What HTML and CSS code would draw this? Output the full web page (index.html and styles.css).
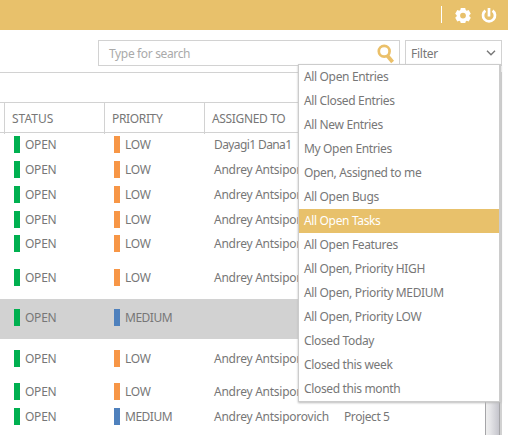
FILE: index.html
```html
<!DOCTYPE html>
<html lang="en">
<head>
<meta charset="utf-8">
<title>Entries</title>
<link rel="stylesheet" href="styles.css">
</head>
<body>
<header class="topbar">
  <span class="divider"></span>
  <svg class="gear" viewBox="0 0 16 16" width="16" height="16"><path fill="#fff" fill-rule="evenodd" d="M5.800 1h4.400l.5 2.100 1 .6 2-.7 2.100 3.700-1.500 1.500v1.100l1.500 1.500-2.100 3.700-2-.7-1 .6-.5 1.900H5.800l-.5-1.900-1-.6-2 .7L.2 10.800l1.500-1.500V8.200L.2 6.700 2.300 3l2 .7 1-.6zM8 5.700a2.900 2.900 0 1 0 0 5.800 2.900 2.900 0 0 0 0-5.800z"/></svg>
  <svg class="power" viewBox="0 0 16 18" width="16" height="18" fill="none" stroke="#fff" stroke-width="2.700"><path d="M4.400 4.600a6 6 0 1 0 7.200 0M8 2v8.500"/></svg>
</header>
<div class="tools">
  <div class="search"><span>Type for search</span>
    <svg viewBox="0 0 18 20" width="18" height="20" fill="none" stroke="#ebc069"><circle cx="7.200" cy="7.300" r="5.400" stroke-width="2.700"/><path d="M10.600 12l5 6" stroke-width="3.700"/></svg>
  </div>
  <div class="filter"><span>Filter</span>
    <svg viewBox="0 0 10 6" width="10" height="6" fill="none" stroke="#777" stroke-width="1.400"><path d="M1 .8l4 4 4-4"/></svg>
    <ul class="menu">
      <li>All Open Entries</li>
      <li>All Closed Entries</li>
      <li>All New Entries</li>
      <li>My Open Entries</li>
      <li>Open, Assigned to me</li>
      <li>All Open Bugs</li>
      <li class="active">All Open Tasks</li>
      <li>All Open Features</li>
      <li>All Open, Priority HIGH</li>
      <li>All Open, Priority MEDIUM</li>
      <li>All Open, Priority LOW</li>
      <li>Closed Today</li>
      <li>Closed this week</li>
      <li>Closed this month</li>
    </ul>
  </div>
</div>
<main class="panel">
  <div class="head"><span></span><span class="status">STATUS</span><span>PRIORITY</span><span>ASSIGNED TO</span></div>
  <div class="body">
    <div class="rows">
      <div class="row"><span class="tag open">OPEN</span><span class="tag low">LOW</span><span class="who tight">Dayagi1 Dana1</span></div>
      <div class="row"><span class="tag open">OPEN</span><span class="tag low">LOW</span><span class="who">Andrey Antsiporovich</span></div>
      <div class="row"><span class="tag open">OPEN</span><span class="tag low">LOW</span><span class="who">Andrey Antsiporovich</span></div>
      <div class="row short"><span class="tag open">OPEN</span><span class="tag low">LOW</span><span class="who">Andrey Antsiporovich</span></div>
      <div class="row"><span class="tag open">OPEN</span><span class="tag low">LOW</span><span class="who">Andrey Antsiporovich</span></div>
      <div class="row tall"><span class="tag open">OPEN</span><span class="tag low">LOW</span><span class="who">Andrey Antsiporovich</span></div>
      <div class="row selected"><span class="tag open">OPEN</span><span class="tag medium">MEDIUM</span></div>
      <div class="row mid"><span class="tag open">OPEN</span><span class="tag low">LOW</span><span class="who">Andrey Antsiporovich</span></div>
      <div class="row last"><span class="tag open">OPEN</span><span class="tag low">LOW</span><span class="who">Andrey Antsiporovich</span></div>
      <div class="row last"><span class="tag open">OPEN</span><span class="tag medium">MEDIUM</span><span class="who">Andrey Antsiporovich</span><span class="project">Project 5</span></div>
    </div>
    <div class="scrollbar"></div>
  </div>
</main>
</body>
</html>
```

FILE: styles.css
```css
* { box-sizing: border-box; }
body {
  margin: 0;
  height: 435px;
  overflow: hidden;
  background: #fff;
  color: #777;
  font: 12px/17px "Noto Sans", sans-serif;
  letter-spacing: -0.25px;
  white-space: nowrap;
}
svg { display: block; flex: none; }
.topbar {
  display: flex;
  justify-content: flex-end;
  align-items: flex-start;
  height: 30px;
  padding: 6px 11px 0 0;
  background: #e8c16b;
}
.divider { width: 1px; height: 17px; margin-right: 13px; background: #fff; }
.gear { margin: 1px 10px 0 0; }
.tools {
  display: flex;
  gap: 5px;
  height: 42px;
  padding: 10px 6px 0 98px;
}
.search, .filter {
  display: flex;
  align-items: center;
  justify-content: space-between;
  height: 26px;
  border: 1px solid #d2d2d2;
}
.search { width: 302px; padding: 0 4px 0 10px; color: #aaa; letter-spacing: -0.35px; }
.search svg { margin-top: 2px; }
.filter { position: relative; width: 97px; padding: 0 5px; }
.menu {
  position: absolute;
  z-index: 2;
  top: 23px;
  right: 0;
  width: 203px;
  margin: 0;
  padding: 0;
  list-style: none;
  background: #fff;
  border: 1px solid #ccc;
  border-right-width: 2px;
  box-shadow: 0 1px 2px #bbb;
  letter-spacing: -0.35px;
}
.menu li { height: 24px; padding-left: 5px; line-height: 24px; }
.menu .active { background: #e8c16b; color: #fff; }
.panel {
  width: 502px;
  height: 363px;
  padding-top: 30px;
  border-top: 1px solid #d2d2d2;
  border-right: 2px solid #d2d2d2;
}
.head {
  display: grid;
  grid-template-columns: 4px 100px 100px 1fr;
  height: 31px;
  margin-top: -1px;
  border: solid #d2d2d2;
  border-width: 1px 0;
  line-height: 31px;
  letter-spacing: -0.35px;
}
.head .status { letter-spacing: 0; }
.head span + span { padding-left: 7px; border-left: 1px solid #d2d2d2; }
.body { display: flex; height: 302px; }
.rows { flex: 1; min-width: 0; }
.row {
  display: grid;
  grid-template-columns: 100px 100px 130px 1fr;
  height: 25px;
  padding: 3px 0 0 14px;
}
.tag { display: flex; gap: 5px; }
.tag::before { content: ""; width: 6px; height: 17px; background: #00b050; }
.low::before { background: #f79646; }
.medium { letter-spacing: -0.5px; }
.medium::before { background: #4f81bd; }
.tight { letter-spacing: -0.6px; }
.project { letter-spacing: -0.4px; }
.short { height: 24px; }
.tall { height: 42px; padding-top: 12px; }
.selected { height: 40px; padding-top: 10px; background: #d2d2d2; }
.mid { height: 40px; padding-top: 11px; }
.last { padding-top: 4px; }
.scrollbar {
  width: 15px;
  border: solid #a5a5a8;
  border-width: 0 1px;
  background: linear-gradient(90deg, #eee, #e4e4e7 35%, #c5c5cc);
}
```
